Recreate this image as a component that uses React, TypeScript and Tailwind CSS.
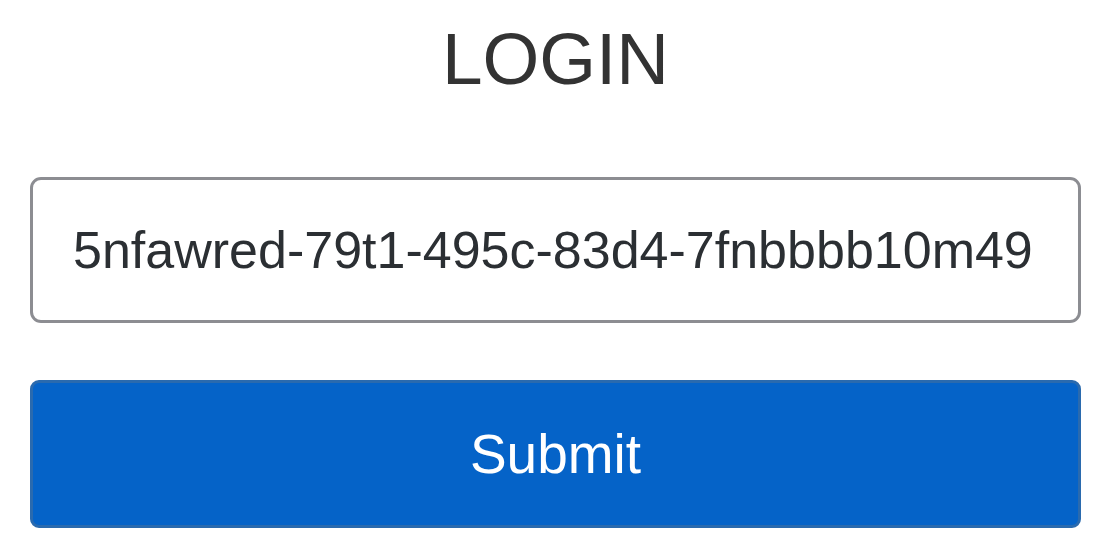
export default function App() {
  return (
    <div
      className="flex flex-col items-center bg-white w-[1116px] h-[554px] pl-[30px] pr-[35px] pt-[18px]"
      style={{ fontFamily: '"Liberation Sans", Arial, sans-serif' }}
    >
      <h1 className="text-[73px] leading-[82px] text-[#333333] font-normal">LOGIN</h1>

      <form className="flex flex-col w-full mt-[77px] gap-[57px]" onSubmit={(e) => e.preventDefault()}>
        <input
          type="text"
          defaultValue="5nfawred-79t1-495c-83d4-7fnbbbb10m49"
          className="w-full h-[146px] rounded-[11px] border-[3px] border-[#8c8d92] bg-white pl-[40px] pr-4 text-[52px] text-[#2b2f33] outline-none"
        />
        <button
          type="submit"
          className="w-full h-[148px] rounded-[9px] border-[3px] border-[#2a6aae] bg-[#0563c8] text-white text-[55px]"
        >
          Submit
        </button>
      </form>
    </div>
  );
}
